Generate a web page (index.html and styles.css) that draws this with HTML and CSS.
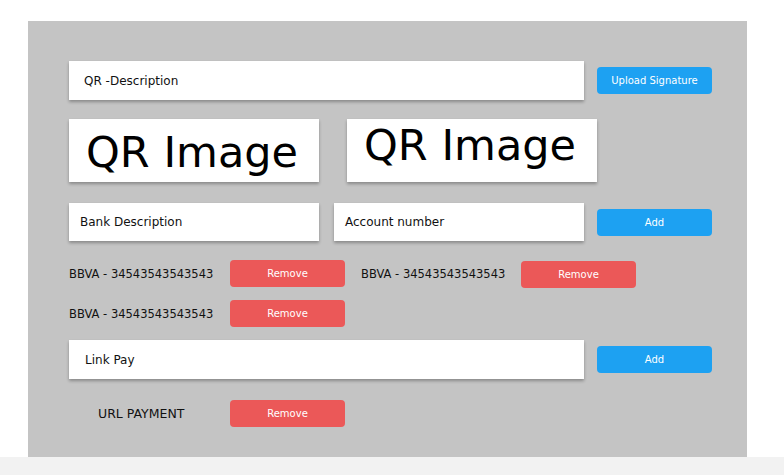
FILE: index.html
```html
<!DOCTYPE html>
<html>
<head>
<meta charset="utf-8">
<link rel="stylesheet" href="styles.css">
</head>
<body>
<div class="panel">
  <div class="row row-qr-desc">
    <div class="field field-wide pad-15">QR -Description</div>
    <button class="btn btn-blue">Upload Signature</button>
  </div>
  <div class="row row-images">
    <div class="qr-box qr-box-low">QR Image</div>
    <div class="qr-box qr-box-high">QR Image</div>
  </div>
  <div class="row row-bank">
    <div class="field field-half pad-11">Bank Description</div>
    <div class="field field-half pad-11">Account number</div>
    <button class="btn btn-blue">Add</button>
  </div>
  <div class="row row-item first-item">
    <span class="item-label">BBVA - 34543543543543</span>
    <button class="btn btn-red">Remove</button>
    <span class="item-label item-label-2">BBVA - 34543543543543</span>
    <button class="btn btn-red shift-down">Remove</button>
  </div>
  <div class="row row-item second-item">
    <span class="item-label">BBVA - 34543543543543</span>
    <button class="btn btn-red">Remove</button>
  </div>
  <div class="row row-link">
    <div class="field field-wide pad-16">Link Pay</div>
    <button class="btn btn-blue">Add</button>
  </div>
  <div class="row row-item url-item">
    <span class="item-label url-label">URL PAYMENT</span>
    <button class="btn btn-red">Remove</button>
  </div>
</div>
<div class="footer"></div>
</body>
</html>
```

FILE: styles.css
```css
html, body {
  margin: 0;
  padding: 0;
  background: #ffffff;
  font-family: "DejaVu Sans", sans-serif;
  color: #111111;
}

.panel {
  margin: 21px 37px 0 28px;
  width: 719px;
  height: 436px;
  box-sizing: border-box;
  background: #c4c4c4;
  padding: 40px 35px 0 41px;
}

.footer {
  height: 18px;
  background: #f2f2f2;
}

.row {
  display: flex;
  align-items: center;
}

.field {
  background: #ffffff;
  box-shadow: 0 2px 3px rgba(0, 0, 0, 0.3);
  font-size: 12px;
  display: flex;
  align-items: center;
  box-sizing: border-box;
}

.field-wide {
  width: 515px;
  height: 39px;
  margin-right: 13px;
}

.field-half {
  width: 250px;
  height: 38px;
}

.field-half + .field-half {
  margin-left: 15px;
  margin-right: 13px;
}

.pad-15 { padding-left: 15px; }
.pad-11 { padding-left: 11px; }
.pad-16 { padding-left: 16px; }

.btn {
  width: 115px;
  height: 27px;
  border: none;
  border-radius: 4px;
  color: #ffffff;
  font-family: "DejaVu Sans", sans-serif;
  font-size: 10px;
  padding: 0;
  margin: 0;
}

.btn-blue { background: #1da1f2; }
.btn-red { background: #eb5858; }

.row-images {
  margin-top: 19px;
  align-items: flex-start;
  gap: 28px;
}

.qr-box {
  width: 250px;
  height: 63px;
  box-sizing: border-box;
  background: #ffffff;
  box-shadow: 0 2px 3px rgba(0, 0, 0, 0.3);
  font-size: 43px;
  line-height: 43px;
  padding-left: 17px;
  color: #000000;
}

.qr-box-low { padding-top: 12px; }
.qr-box-high { padding-top: 5px; }

.row-bank { margin-top: 21px; }

.row-item { height: 27px; }
.first-item { margin-top: 19px; }
.second-item { margin-top: 13px; }
.url-item { margin-top: 21px; }

.item-label {
  width: 161px;
  font-size: 11.5px;
}

.item-label-2 {
  margin-left: 16px;
  width: 160px;
}

.url-label {
  font-size: 12.5px;
  padding-left: 29px;
  box-sizing: border-box;
}

.shift-down { position: relative; top: 1px; }

.row-link { margin-top: 13px; }
```
